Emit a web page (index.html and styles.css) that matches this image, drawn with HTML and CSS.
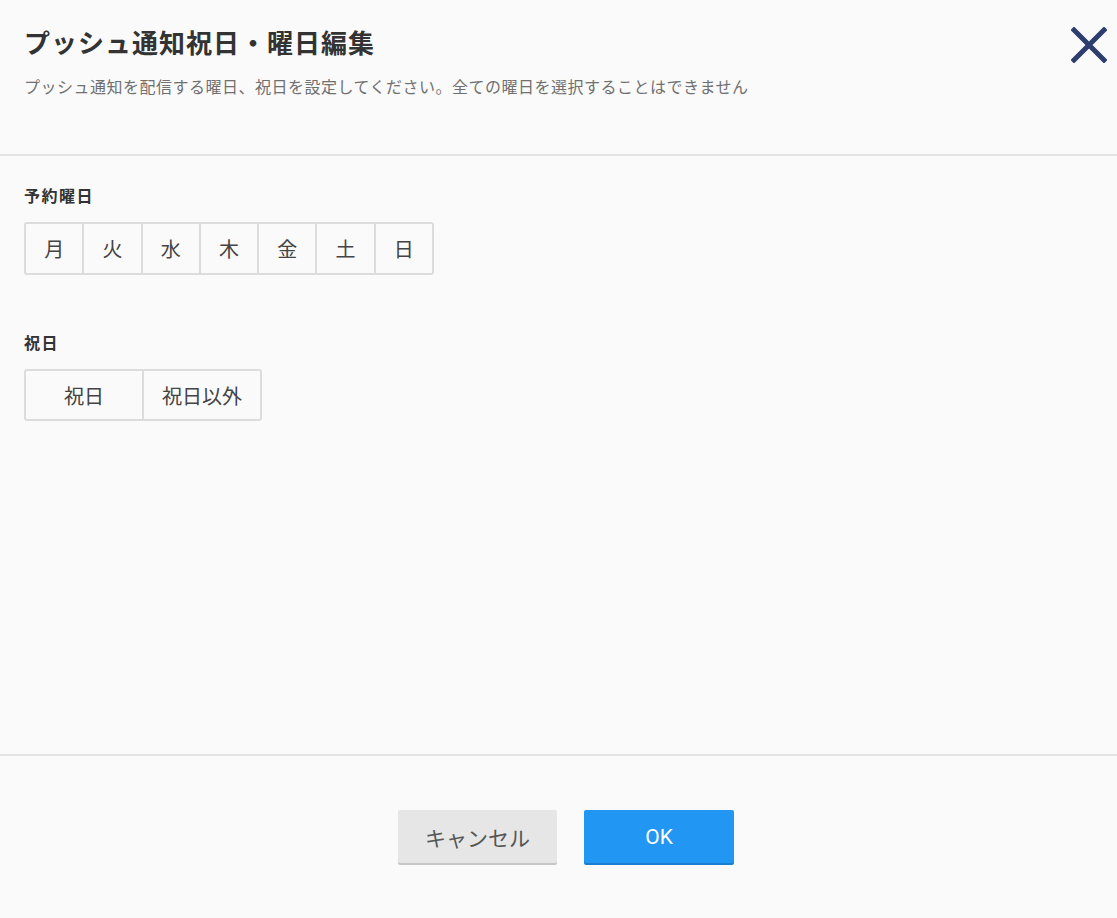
FILE: index.html
```html
<!DOCTYPE html>
<html lang="ja">
<head>
    <meta charset="UTF-8">
    <title>プッシュ通知祝日・曜日編集</title>
    <link rel="stylesheet" href="styles.css">
</head>
<body>
    <div class="dialog">
        <header class="dialog-header">
            <h1>プッシュ通知祝日・曜日編集</h1>
            <p>プッシュ通知を配信する曜日、祝日を設定してください。全ての曜日を選択することはできません</p>
            <button class="close" aria-label="閉じる">
                <svg width="36" height="36" viewBox="0 0 36 36">
                    <path d="M3 3 L33 33 M33 3 L3 33" stroke="#2d3d6e" stroke-width="5" stroke-linecap="square" fill="none"/>
                </svg>
            </button>
        </header>

        <section class="dialog-body">
            <div class="field">
                <h2>予約曜日</h2>
                <div class="toggle-group days">
                    <button>月</button>
                    <button>火</button>
                    <button>水</button>
                    <button>木</button>
                    <button>金</button>
                    <button>土</button>
                    <button>日</button>
                </div>
            </div>
            <div class="field">
                <h2>祝日</h2>
                <div class="toggle-group holidays">
                    <button>祝日</button>
                    <button>祝日以外</button>
                </div>
            </div>
        </section>

        <footer class="dialog-footer">
            <button class="btn btn-cancel">キャンセル</button>
            <button class="btn btn-ok">OK</button>
        </footer>
    </div>
</body>
</html>
```

FILE: styles.css
```css
body {
    margin: 0;
    padding: 0;
    background: #fafafa;
    color: #333;
    font-family: 'Noto Sans CJK JP', 'Noto Sans', sans-serif;
}

.dialog {
    display: flex;
    flex-direction: column;
    height: 918px;
}

.dialog-header {
    position: relative;
    padding: 24px 24px 56px;
    border-bottom: 2px solid #e4e4e4;
}

.dialog-header h1 {
    margin: 0;
    font-size: 26px;
    line-height: 36px;
    letter-spacing: 1px;
    font-weight: bold;
    color: #333;
}

.dialog-header p {
    margin: 14px 0 0;
    font-size: 16px;
    line-height: 24px;
    letter-spacing: 0.5px;
    color: #707070;
}

.close {
    position: absolute;
    top: 27px;
    right: 10px;
    padding: 0;
    border: none;
    background: none;
    cursor: pointer;
}

.close svg {
    display: block;
}

.dialog-body {
    flex: 1;
    padding: 29px 24px 0;
    border-bottom: 2px solid #e4e4e4;
}

.field {
    margin-bottom: 57px;
}

.field h2 {
    margin: 0 0 17px;
    font-size: 16px;
    line-height: 20px;
    letter-spacing: 1.5px;
    font-weight: bold;
    color: #333;
}

.toggle-group {
    display: flex;
}

.toggle-group button {
    flex: 1;
    height: 53px;
    margin: 0 0 0 -2px;
    padding: 0;
    border: 2px solid #dcdcdc;
    background: #fafafa;
    color: #444;
    font-family: inherit;
    font-size: 20px;
    cursor: pointer;
}

.toggle-group button:first-child {
    margin-left: 0;
    border-radius: 3px 0 0 3px;
}

.toggle-group button:last-child {
    border-radius: 0 3px 3px 0;
}

.days {
    width: 410px;
}

.holidays {
    width: 238px;
}

.holidays button {
    height: 52px;
}

.dialog-footer {
    display: flex;
    justify-content: center;
    align-items: flex-start;
    gap: 27px;
    height: 108px;
    padding: 54px 0 0 15px;
}

.btn {
    height: 53px;
    border: none;
    border-radius: 2px;
    font-family: inherit;
    font-size: 21px;
    cursor: pointer;
}

.btn-cancel {
    width: 159px;
    background: #e6e6e6;
    color: #555;
    box-shadow: 0 2px 0 #c6c6c6;
}

.btn-ok {
    width: 150px;
    background: #2196f3;
    color: white;
    font-family: 'Roboto', sans-serif;
    box-shadow: 0 2px 0 #1a7fd3;
}
```
